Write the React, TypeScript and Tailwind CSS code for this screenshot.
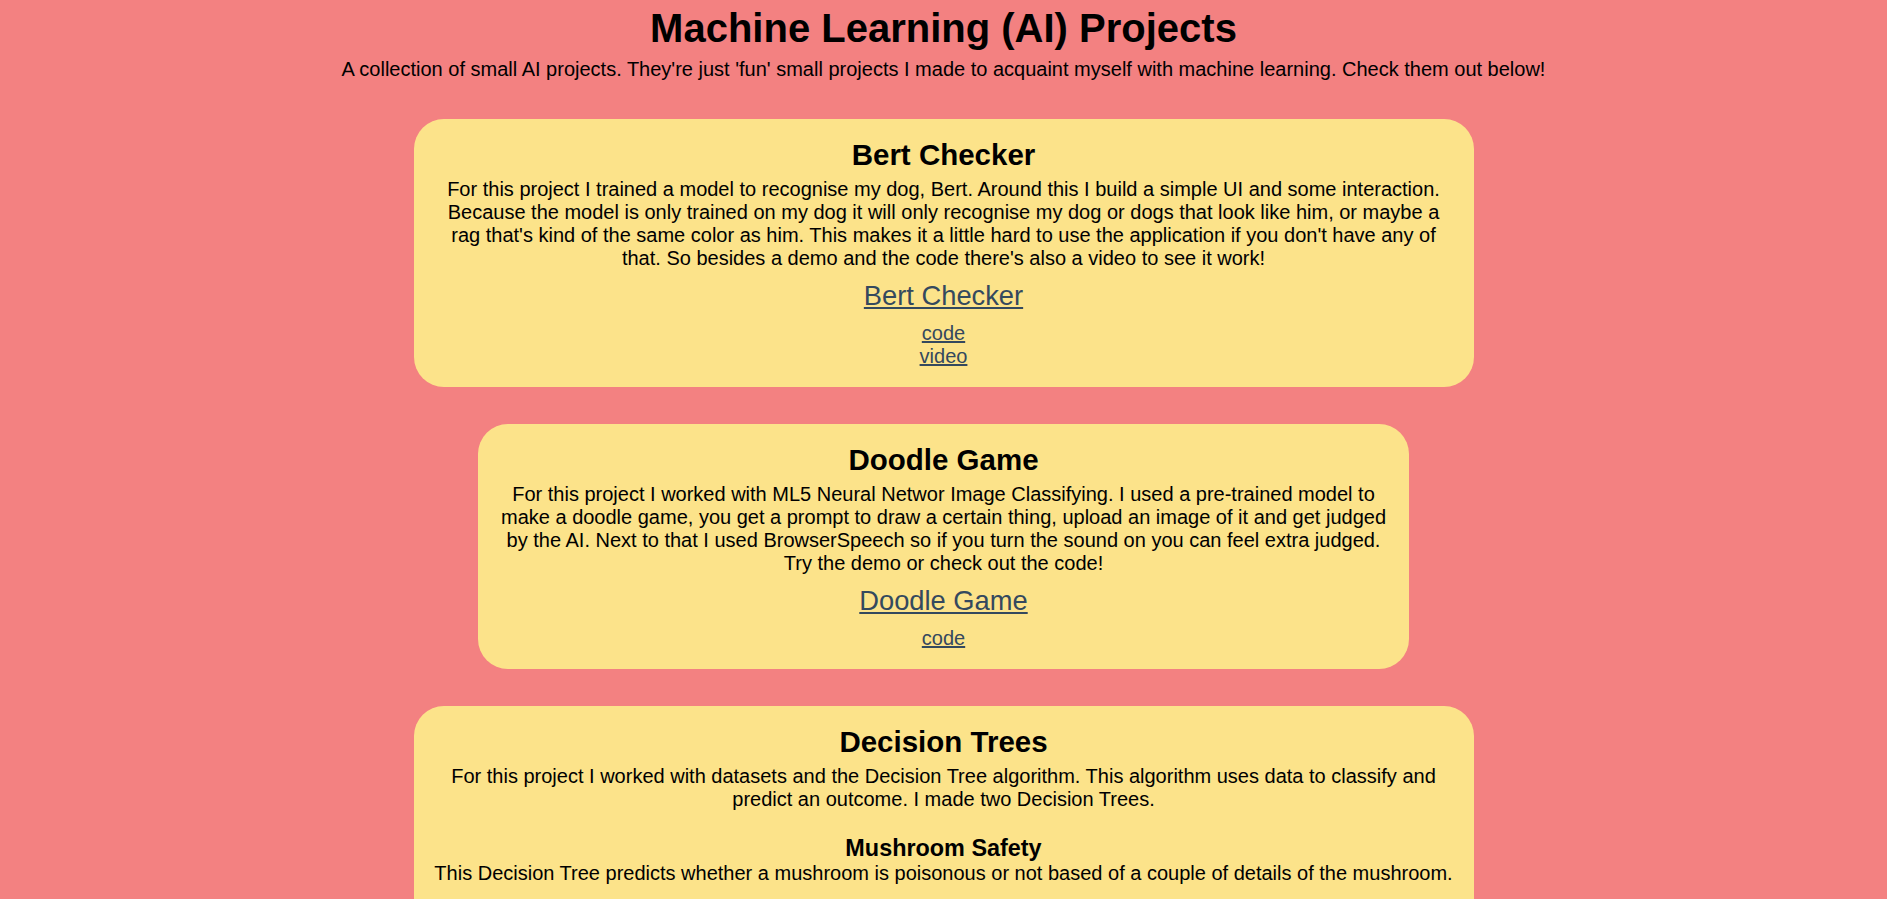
import React from "react";

function BigLink({ children, extra = "" }: { children: React.ReactNode; extra?: string }) {
  return (
    <div className={"text-[27.3px] leading-[31px] " + extra}>
      <a href="#" className="text-[#34495e] underline">
        {children}
      </a>
    </div>
  );
}

function SmallLinks({ items }: { items: string[] }) {
  return (
    <div className="mt-[11px] flex flex-col items-center text-[20px] leading-[23px]">
      {items.map((s) => (
        <a key={s} href="#" className="text-[#34495e] underline">
          {s}
        </a>
      ))}
    </div>
  );
}

export default function App() {
  return (
    <div
      className="min-h-screen bg-[#F38181] pb-10 text-center text-[20px] leading-[23px] text-black"
      style={{ fontFamily: '"Liberation Sans", Arial, sans-serif' }}
    >
      <h1 className="pt-[5px] text-[40px] font-bold leading-[46px]">
        Machine Learning (AI) Projects
      </h1>
      <p className="mt-[6.5px]">
        A collection of small AI projects. They're just 'fun' small projects I made to acquaint myself with machine learning. Check them out below!
      </p>

      <div className="mt-[38.5px] flex flex-col items-center gap-[37px]">
        <section className="w-[1060px] rounded-[30px] bg-[#FCE38A] px-[19px] pb-[19px] pt-[19px]">
          <h2 className="text-[29.5px] font-bold leading-[34px]">Bert Checker</h2>
          <p className="mt-[6px]">
            For this project I trained a model to recognise my dog, Bert. Around this I build a simple UI and some interaction. Because the model is only trained on my dog it will only recognise my dog or dogs that look like him, or maybe a rag that's kind of the same color as him. This makes it a little hard to use the application if you don't have any of that. So besides a demo and the code there's also a video to see it work!
          </p>
          <BigLink extra="mt-[10px]">Bert Checker</BigLink>
          <SmallLinks items={["code", "video"]} />
        </section>

        <section className="w-[931px] rounded-[30px] bg-[#FCE38A] px-[19px] pb-[19px] pt-[19px]">
          <h2 className="text-[29.5px] font-bold leading-[34px]">Doodle Game</h2>
          <p className="mt-[6px]">
            For this project I worked with ML5 Neural Networ Image Classifying. I used a pre-trained model to make a doodle game, you get a prompt to draw a certain thing, upload an image of it and get judged by the AI. Next to that I used BrowserSpeech so if you turn the sound on you can feel extra judged. Try the demo or check out the code!
          </p>
          <BigLink extra="mt-[10px]">Doodle Game</BigLink>
          <SmallLinks items={["code"]} />
        </section>

        <section className="w-[1060px] rounded-[30px] bg-[#FCE38A] px-[19px] pb-[19px] pt-[19px]">
          <h2 className="text-[29.5px] font-bold leading-[34px]">Decision Trees</h2>
          <p className="mt-[6px]">
            For this project I worked with datasets and the Decision Tree algorithm. This algorithm uses data to classify and predict an outcome. I made two Decision Trees.
          </p>
          <h3 className="mt-[24px] text-[23.4px] font-bold leading-[27px]">Mushroom Safety</h3>
          <p>
            This Decision Tree predicts whether a mushroom is poisonous or not based of a couple of details of the mushroom.
          </p>
          <BigLink extra="mt-[24px]">Mushroom Safety</BigLink>
          <SmallLinks items={["code"]} />
        </section>
      </div>
    </div>
  );
}
